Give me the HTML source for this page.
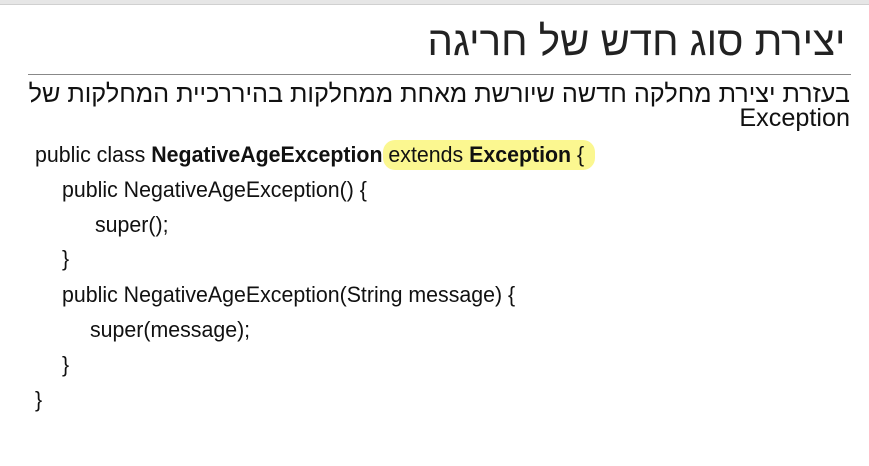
<!DOCTYPE html>
<html><head><meta charset="utf-8"><style>
body{margin:0;width:869px;height:466px;background:#fff;overflow:hidden;position:relative;font-family:"Liberation Sans",sans-serif;color:#111}
.top{position:absolute;left:0;top:0;width:869px;height:4px;background:#e6e6e6;border-bottom:1px solid #d0d0d0}
.title{position:absolute;right:24px;top:18px;font-size:41px;direction:rtl;font-family:"Liberation Sans","DejaVu Sans",sans-serif;color:#222;transform:scaleX(0.98);transform-origin:right}
.rule{position:absolute;left:28px;top:74px;width:823px;height:1px;background:#888}
.sub{position:absolute;right:19px;top:82px;width:826px;direction:rtl;text-align:right;font-size:25.2px;line-height:24px;font-family:"Liberation Sans","DejaVu Sans",sans-serif}
.code div{position:absolute;font-size:22px;white-space:pre;line-height:26px;transform:scaleX(0.97);transform-origin:left}
.hl{position:absolute;left:383px;top:140px;width:212px;height:30px;background:#fbf790;border-radius:12px}
</style></head><body>
<div class="top"></div>
<div class="title">יצירת סוג חדש של חריגה</div>
<div class="rule"></div>
<div class="sub">בעזרת יצירת מחלקה חדשה שיורשת מאחת ממחלקות בהיררכיית המחלקות של Exception</div>
<div class="hl"></div>
<div class="code">
<div style="left:35px;top:142px">public class <b>NegativeAgeException</b> extends <b>Exception</b> {</div>
<div style="left:62px;top:177px">public NegativeAgeException() {</div>
<div style="left:95px;top:212px">super();</div>
<div style="left:62px;top:246px">}</div>
<div style="left:62px;top:282px">public NegativeAgeException(String message) {</div>
<div style="left:90px;top:317px">super(message);</div>
<div style="left:62px;top:352px">}</div>
<div style="left:35px;top:387px">}</div>
</div>
</body></html>
